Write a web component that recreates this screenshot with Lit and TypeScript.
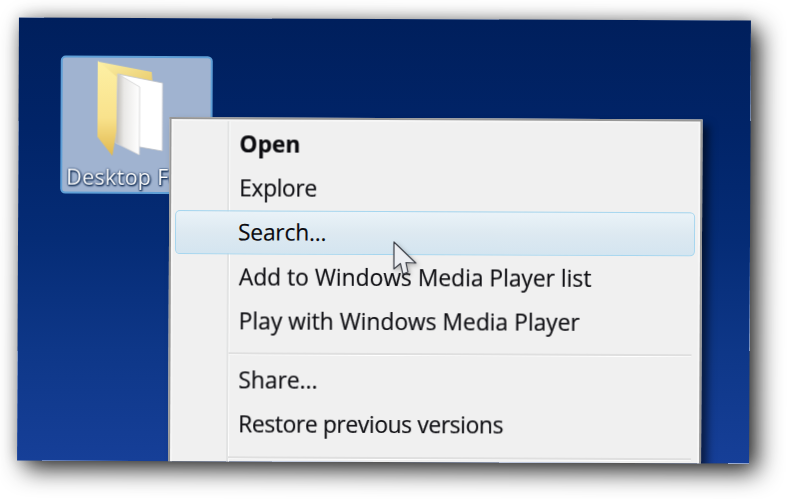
import { LitElement, html, css, svg } from "lit";
import { customElement } from "lit/decorators.js";

const folder = svg`<svg class="folder" width="67" height="97" viewBox="0 0 67 97">
  <defs>
    <linearGradient id="fb" x1="0" y1="0" x2="1" y2="1"><stop offset="0" stop-color="#fbefa6"/><stop offset="1" stop-color="#e7c766"/></linearGradient>
    <linearGradient id="ff" x1="0" y1="0" x2="0" y2="1"><stop offset="0" stop-color="#fdf0a4"/><stop offset=".6" stop-color="#f9e28c"/><stop offset="1" stop-color="#e0b84e"/></linearGradient>
    <linearGradient id="pg" x1="0" y1="0" x2="1" y2="0"><stop offset="0" stop-color="#b9b6b0"/><stop offset=".35" stop-color="#e9e8e6"/><stop offset="1" stop-color="#ffffff"/></linearGradient>
    <linearGradient id="ps" x1="0" y1="0" x2="1" y2="0"><stop offset="0" stop-color="#cfcfcf"/><stop offset=".15" stop-color="#ffffff"/></linearGradient>
  </defs>
  <path d="M1 1 L54 11 L55 24 L20 30 Z" fill="url(#fb)"/>
  <path d="M20 13 L65 22 L65 90 L42 86 L30 60 Z" fill="url(#ps)" stroke="#bfc3c9" stroke-width=".8"/>
  <path d="M20 13 L42 26 L42 94 L18 82 Z" fill="url(#pg)" stroke="#d2d2d2" stroke-width=".8"/>
  <path d="M0 0 L19 16 L19 70 L15 95 L0 76 Z" fill="url(#ff)"/>
</svg>`;

const cursor = svg`<svg class="cursor" width="30" height="40" viewBox="0 0 30 40">
  <path d="M2 1 L2 28 L8.5 22.5 L11 33 L16 31 L14 21.5 L24 22 Z" fill="#eceef2" stroke="#3d4048" stroke-width="1.2" stroke-linejoin="round"/>
</svg>`;

@customElement("app-root")
export class AppRoot extends LitElement {
  static styles = css`
    :host { display: block; width: 787px; height: 499px; overflow: hidden; background: #fff; position: relative; }
    .desktop {
      position: absolute; left: 18px; top: 18.5px; width: 732px; height: 443px;
      transform: rotate(0.25deg); overflow: hidden;
      background: linear-gradient(180deg, #001f5c 0%, #012468 25%, #052c76 50%, #0e3788 75%, #163f98 100%);
      font-family: "Open Sans", "Noto Sans", sans-serif;
    }
    .shadow {
      position: absolute; left: 18px; top: 18.5px; width: 732px; height: 443px;
      transform: rotate(0.25deg);
      box-shadow: 8px 8px 24px rgba(0,0,0,.85), 0 -1px 14px rgba(0,0,0,.18);
    }
    .icon {
      position: absolute; left: 42px; top: 38px; width: 152px; height: 138px;
      box-sizing: border-box; border: 2px solid #5f9fd6; border-radius: 5px;
      background: #a0b3d0;
    }
    .folder { position: absolute; left: 35px; top: 3px; filter: blur(.4px); }
    .label {
      position: absolute; left: 4px; top: 105px; white-space: nowrap;
      font-size: 21.5px; color: #fff; line-height: 28px; letter-spacing: .3px;
      text-shadow: 0 1px 2px #0c2850, 1px 1px 2px #0c2850, 0 0 2px #0c2850;
      filter: blur(.3px);
    }
    .menu {
      position: absolute; left: 151px; top: 99px; width: 533px; height: 372px;
      box-sizing: border-box; background: #f0f0f0;
      border: 2px solid #979797; border-bottom: none;
      box-shadow: inset 0 0 0 2px #f6f6f6, 6px 6px 8px rgba(0,0,0,.55);
    }
    .gutter {
      position: absolute; left: 56px; top: 2px; bottom: 0; width: 2px; background: #e2e3e3;
      border-right: 1px solid #fff;
    }
    .list { display: flex; flex-direction: column; padding-top: 2px; position: relative; }
    .item {
      height: 44.3px; padding-left: 65px; display: flex; align-items: center; flex: none;
      font-size: 22.8px; color: #0c0c10; white-space: nowrap; margin: 0 3px;
      box-sizing: border-box; filter: blur(.3px); -webkit-text-stroke: .15px #0c0c10;
    }
    .open { font-weight: 700; }
    .tight { letter-spacing: -.36px; }
    .hot {
      border: 1.5px solid #a6d6ef; border-radius: 5px;
      background: linear-gradient(180deg, #eaf3f8 0%, #dde9f1 50%, #d4e5f0 100%);
      margin: 0 5px 0 4px; padding-left: 62px; filter: none; letter-spacing: -.2px;
    }
    .sep { height: 2px; background: #dfdfdf; border-bottom: 1px solid #fff; margin: 10px 8px 2px 58px; flex: none; }
    .cursor { position: absolute; left: 374px; top: 222px; filter: blur(.4px) drop-shadow(2px 2px 2px rgba(0,0,0,.25)); }
  `;

  render() {
    return html`
      <div class="shadow"></div>
      <div class="desktop">
        <div class="icon">
          ${folder}
          <div class="label">Desktop Folder</div>
        </div>
        <div class="menu">
          <div class="gutter"></div>
          <div class="list">
            <div class="item open">Open</div>
            <div class="item tight">Explore</div>
            <div class="item hot">Search...</div>
            <div class="item">Add to Windows Media Player list</div>
            <div class="item">Play with Windows Media Player</div>
            <div class="sep"></div>
            <div class="item">Share...</div>
            <div class="item tight">Restore previous versions</div>
            <div class="sep"></div>
          </div>
        </div>
        ${cursor}
      </div>
    `;
  }
}
